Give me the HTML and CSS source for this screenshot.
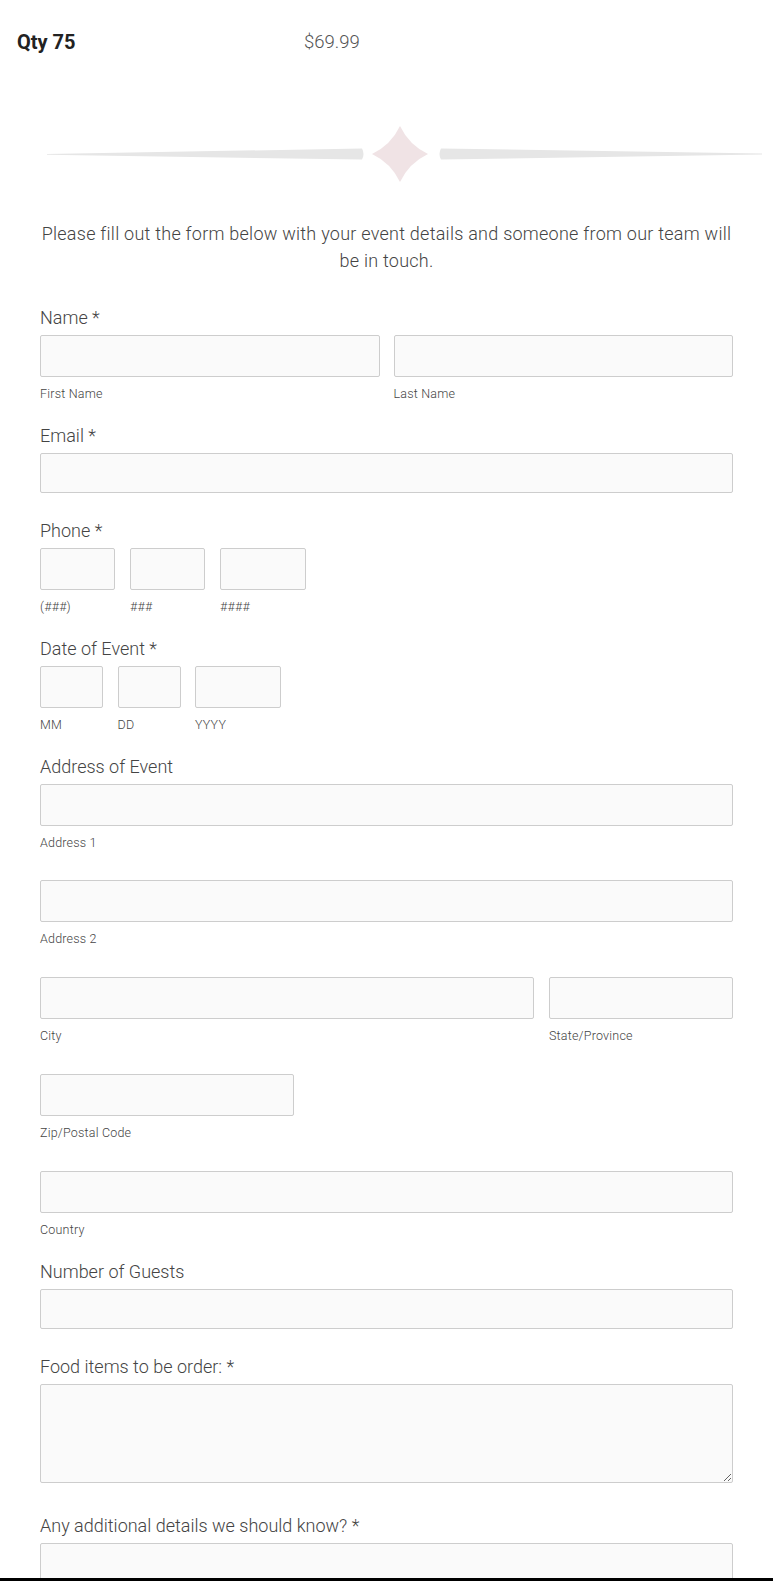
FILE: index.html
```html
<!DOCTYPE html>
<html lang="en">
<head>
<meta charset="utf-8">
<title>Event Order Form</title>
<link rel="stylesheet" href="styles.css">
</head>
<body>
<div class="page">
  <div class="order-row">
    <span class="qty">Qty 75</span>
    <span class="price">$69.99</span>
  </div>

  <svg class="divider" viewBox="0 0 773 70" width="773" height="70" aria-hidden="true">
    <path class="divider-line" d="M47 35 L362 29.5 Q365 35 362 40.5 L47 35.8 Z"/>
    <path class="divider-line" d="M441 29.5 L762 34.6 L762 35.6 L441 40.5 Q438 35 441 29.5 Z"/>
    <path class="divider-gem" d="M400 7 Q409 26 428 35 Q409 44 400 63 Q391 44 372 35 Q391 26 400 7 Z"/>
  </svg>

  <form class="event-form">
    <p class="intro">Please fill out the form below with your event details and someone from our team will be in touch.</p>

    <div class="field">
      <label class="field-label">Name *</label>
      <div class="cols cols-name">
        <div class="sub"><input class="box" type="text"><span class="sublabel">First Name</span></div>
        <div class="sub"><input class="box" type="text"><span class="sublabel">Last Name</span></div>
      </div>
    </div>

    <div class="field field-plain">
      <label class="field-label">Email *</label>
      <input class="box box-short" type="text">
    </div>

    <div class="field">
      <label class="field-label">Phone *</label>
      <div class="cols cols-phone">
        <div class="sub"><input class="box" type="text"><span class="sublabel">(###)</span></div>
        <div class="sub"><input class="box" type="text"><span class="sublabel">###</span></div>
        <div class="sub"><input class="box" type="text"><span class="sublabel">####</span></div>
      </div>
    </div>

    <div class="field">
      <label class="field-label">Date of Event *</label>
      <div class="cols cols-date">
        <div class="sub"><input class="box" type="text"><span class="sublabel">MM</span></div>
        <div class="sub"><input class="box" type="text"><span class="sublabel">DD</span></div>
        <div class="sub"><input class="box" type="text"><span class="sublabel">YYYY</span></div>
      </div>
    </div>

    <div class="field">
      <label class="field-label">Address of Event</label>
      <div class="sub sub-row"><input class="box" type="text"><span class="sublabel">Address 1</span></div>
      <div class="sub sub-row"><input class="box" type="text"><span class="sublabel">Address 2</span></div>
      <div class="cols cols-city sub-row">
        <div class="sub"><input class="box" type="text"><span class="sublabel">City</span></div>
        <div class="sub"><input class="box" type="text"><span class="sublabel">State/Province</span></div>
      </div>
      <div class="sub sub-row sub-zip"><input class="box" type="text"><span class="sublabel">Zip/Postal Code</span></div>
      <div class="sub"><input class="box" type="text"><span class="sublabel">Country</span></div>
    </div>

    <div class="field field-plain">
      <label class="field-label">Number of Guests</label>
      <input class="box box-short" type="text">
    </div>

    <div class="field field-text">
      <label class="field-label">Food items to be order: *</label>
      <textarea class="area"></textarea>
    </div>

    <div class="field">
      <label class="field-label">Any additional details we should know? *</label>
      <textarea class="area"></textarea>
    </div>
  </form>
</div>
<div class="bottom-bar"></div>
</body>
</html>
```

FILE: styles.css
```css
* { box-sizing: border-box; }

html, body {
  margin: 0;
  padding: 0;
  background: #ffffff;
}

body {
  font-family: Roboto, "Liberation Sans", Arial, sans-serif;
  color: #444;
}

.page {
  height: 1578px;
  overflow: hidden;
}

.bottom-bar {
  height: 3px;
  background: #000;
}

.order-row {
  display: flex;
  align-items: center;
  padding: 30px 0 0 17px;
  height: 54px;
  line-height: 24px;
}

.qty {
  width: 287px;
  font-size: 20px;
  font-weight: 700;
  color: #222;
}

.price {
  font-size: 18.5px;
  font-weight: 300;
  color: #555;
}

.divider {
  display: block;
  margin-top: 65px;
  width: 773px;
  height: 70px;
}

.divider-line { fill: #e6e6e6; }
.divider-gem { fill: #f0e3e5; }

.event-form {
  padding: 0 40px;
}

.intro {
  margin: 31px 0 32px;
  text-align: center;
  font-size: 18px;
  font-weight: 300;
  line-height: 27px;
  letter-spacing: 0.25px;
  color: #444;
}

.field {
  margin-bottom: 22px;
}

.field-plain {
  margin-bottom: 25.5px;
}

.field-text {
  margin-bottom: 31px;
}

.field-label {
  display: block;
  font-size: 18px;
  font-weight: 300;
  line-height: 24px;
  margin-bottom: 5px;
  color: #444;
}

.box {
  display: block;
  width: 100%;
  height: 42px;
  margin: 0;
  padding: 0 8px;
  border: 1px solid #cdcdcd;
  border-radius: 2px;
  background: #fafafa;
  font: inherit;
}

.box-short {
  height: 40px;
}

.sublabel {
  display: block;
  margin-top: 9px;
  font-size: 12.5px;
  line-height: 16px;
  font-weight: 300;
  letter-spacing: 0.2px;
  color: #444;
}

.cols {
  display: grid;
}

.cols-name {
  grid-template-columns: 1fr 1fr;
  column-gap: 14px;
}

.cols-phone {
  grid-template-columns: 75px 75px 86px;
  column-gap: 15px;
}

.cols-date {
  grid-template-columns: 63px 63px 86px;
  column-gap: 14.5px;
}

.cols-city {
  grid-template-columns: 1fr 184px;
  column-gap: 15px;
}

.sub-row {
  margin-bottom: 29.9px;
}

.sub-zip {
  width: 254px;
}

.area {
  display: block;
  width: 100%;
  height: 99px;
  margin: 0;
  padding: 8px;
  border: 1px solid #cdcdcd;
  border-radius: 2px;
  background: #fafafa;
  font: inherit;
  resize: vertical;
}
```
